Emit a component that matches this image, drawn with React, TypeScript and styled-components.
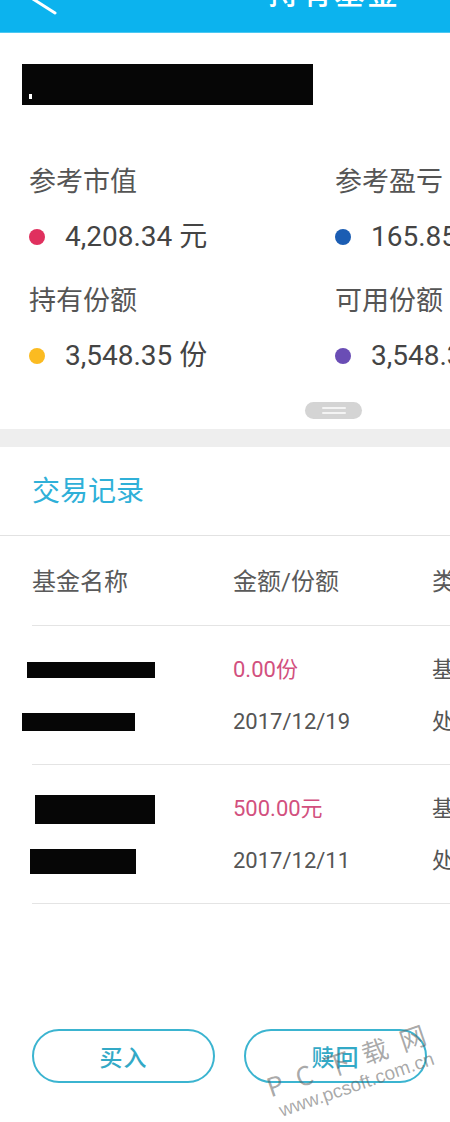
import React from "react";
import styled, { createGlobalStyle } from "styled-components";

const Global = createGlobalStyle`
  html, body { margin: 0; padding: 0; background: #fff; }
  body { font-family: Roboto, "Noto Sans CJK SC", sans-serif; }
  * { box-sizing: border-box; }
`;

const Page = styled.div`
  position: relative;
  width: 450px;
  min-height: 1122px;
  overflow: hidden;
  display: flex;
  flex-direction: column;
  background: #fff;
  white-space: nowrap;
`;

const Header = styled.header`
  height: 33px;
  background: #0cb3ee;
  border-bottom: 1px solid #4cc8f2;
  display: flex;
  align-items: flex-start;
  overflow: hidden;
  padding-left: 31px;
`;

const Back = styled.svg`
  width: 30px;
  height: 40px;
  margin-top: -20px;
  flex: none;
`;

const Title = styled.h1`
  margin: -21px 0 0 207px;
  font-size: 31px;
  line-height: 30px;
  font-weight: 500;
  letter-spacing: 2px;
  color: #fff;
`;

const NameBlock = styled.div`
  padding: 31px 0 0 22px;
  display: flex;
  align-items: center;
`;

const Redact = styled.div<{ $w: number; $h: number; $ml?: number }>`
  position: relative;
  width: ${(p) => p.$w}px;
  height: ${(p) => p.$h}px;
  margin-left: ${(p) => p.$ml ?? 0}px;
  background: #060606;
  flex: none;
`;

const Speck = styled.span`
  position: absolute;
  left: 7px;
  bottom: 6px;
  width: 3px;
  height: 5px;
  background: #fff;
`;

const Stats = styled.section`
  display: grid;
  grid-template-columns: 306px 1fr;
  row-gap: 28px;
  padding: 59px 0 0 29px;
`;

const Stat = styled.div`
  display: flex;
  flex-direction: column;
`;

const StatLabel = styled.div`
  font-size: 27px;
  line-height: 36px;
  color: #555;
`;

const StatValue = styled.div`
  margin-top: 19px;
  display: flex;
  align-items: center;
  font-size: 28px;
  line-height: 36px;
  color: #444;
`;

const Dot = styled.span<{ $c: string }>`
  width: 16px;
  height: 16px;
  border-radius: 50%;
  background: ${(p) => p.$c};
  margin-right: 20px;
  flex: none;
`;

const HandleRow = styled.div`
  display: flex;
  justify-content: flex-start;
  padding: 28px 0 10px 305px;
`;

const Handle = styled.div`
  width: 57px;
  height: 17px;
  border-radius: 9px;
  background: #d4d4d4;
  display: flex;
  flex-direction: column;
  align-items: center;
  justify-content: center;
  gap: 3px;
`;

const HandleLine = styled.span`
  width: 24px;
  height: 2px;
  background: #f4f4f4;
  border-radius: 1px;
`;

const Band = styled.div`
  height: 18px;
  background: #eeeeee;
`;

const SectionTitle = styled.h2`
  margin: 0;
  padding: 25px 0 23px 32px;
  font-size: 28px;
  line-height: 40px;
  font-weight: 400;
  color: #2fb0d8;
  border-bottom: 1px solid #e2e2e2;
`;

const Row = styled.div<{ $head?: boolean }>`
  display: grid;
  grid-template-columns: 201px 199px 1fr;
  margin-left: 32px;
  border-bottom: 1px solid #e4e4e4;
  padding: ${(p) => (p.$head ? "29px 0 26px" : "29px 0 27px")};
  row-gap: 22px;
  align-items: center;
`;

const Cell = styled.div<{ $tone?: "head" | "pink" | "plain" }>`
  font-size: 22px;
  line-height: 30px;
  height: 30px;
  color: ${(p) => (p.$tone === "pink" ? "#d2507e" : p.$tone === "head" ? "#5a5a5a" : "#555")};
  display: flex;
  align-items: center;
`;

const HeadCell = styled(Cell)`
  font-size: 24px;
  line-height: 34px;
  height: 34px;
`;

const Footer = styled.footer`
  margin-top: auto;
  display: flex;
  gap: 29px;
  padding: 0 0 39px 32px;
`;

const Button = styled.button`
  width: 183px;
  height: 54px;
  border-radius: 27px;
  border: 2.5px solid #3bb4d0;
  background: #fff;
  color: #33a9c6;
  font-family: "Noto Sans CJK SC", sans-serif;
  font-size: 23px;
  font-weight: 500;
  letter-spacing: 1px;
  padding: 0;
`;

const Watermark = styled.div`
  position: absolute;
  left: 262px;
  top: 1072px;
  transform: rotate(-19deg);
  transform-origin: left top;
  color: rgba(95, 95, 95, 0.55);
  pointer-events: none;
  display: flex;
  flex-direction: column;
  align-items: flex-start;
`;

const WmBig = styled.span`
  font-family: "Noto Sans CJK SC", sans-serif;
  font-size: 26px;
  line-height: 32px;
  letter-spacing: 4px;
`;

const WmSmall = styled.span`
  font-family: "Liberation Sans", sans-serif;
  font-size: 19px;
  line-height: 22px;
  margin-left: 4px;
`;

const stats = [
  { label: "参考市值", value: "4,208.34 元", color: "#e0305e" },
  { label: "参考盈亏", value: "165.85 元", color: "#1b5db3" },
  { label: "持有份额", value: "3,548.35 份", color: "#fbbb21" },
  { label: "可用份额", value: "3,548.35 份", color: "#6a4db5" },
];

const records = [
  {
    amount: "0.00份",
    date: "2017/12/19",
    type: "基金转换",
    status: "处理中",
    r1: { w: 128, h: 16, ml: -5 },
    r2: { w: 113, h: 18, ml: -10 },
  },
  {
    amount: "500.00元",
    date: "2017/12/11",
    type: "基金申购",
    status: "处理中",
    r1: { w: 120, h: 29, ml: 3 },
    r2: { w: 106, h: 25, ml: -2 },
  },
];

export default function App() {
  return (
    <>
      <Global />
      <Page>
        <Header>
          <Back viewBox="0 0 30 40">
            <path d="M24 0 L2 19 L24 33" fill="none" stroke="#fff" strokeWidth="3" strokeLinecap="round" strokeLinejoin="round" />
          </Back>
          <Title>持有基金</Title>
        </Header>

        <NameBlock>
          <Redact $w={291} $h={41}>
            <Speck />
          </Redact>
        </NameBlock>

        <Stats>
          {stats.map((s) => (
            <Stat key={s.label}>
              <StatLabel>{s.label}</StatLabel>
              <StatValue>
                <Dot $c={s.color} />
                {s.value}
              </StatValue>
            </Stat>
          ))}
        </Stats>

        <HandleRow>
          <Handle>
            <HandleLine />
            <HandleLine />
          </Handle>
        </HandleRow>
        <Band />

        <SectionTitle>交易记录</SectionTitle>

        <Row $head>
          <HeadCell $tone="head">基金名称</HeadCell>
          <HeadCell $tone="head">金额/份额</HeadCell>
          <HeadCell $tone="head">类型</HeadCell>
        </Row>

        {records.map((r) => (
          <Row key={r.date}>
            <Cell>
              <Redact $w={r.r1.w} $h={r.r1.h} $ml={r.r1.ml} />
            </Cell>
            <Cell $tone="pink">{r.amount}</Cell>
            <Cell>{r.type}</Cell>
            <Cell>
              <Redact $w={r.r2.w} $h={r.r2.h} $ml={r.r2.ml} />
            </Cell>
            <Cell>{r.date}</Cell>
            <Cell>{r.status}</Cell>
          </Row>
        ))}

        <Footer>
          <Button>买入</Button>
          <Button>赎回</Button>
        </Footer>

        <Watermark>
          <WmBig>P C 下 载 网</WmBig>
          <WmSmall>www.pcsoft.com.cn</WmSmall>
        </Watermark>
      </Page>
    </>
  );
}
